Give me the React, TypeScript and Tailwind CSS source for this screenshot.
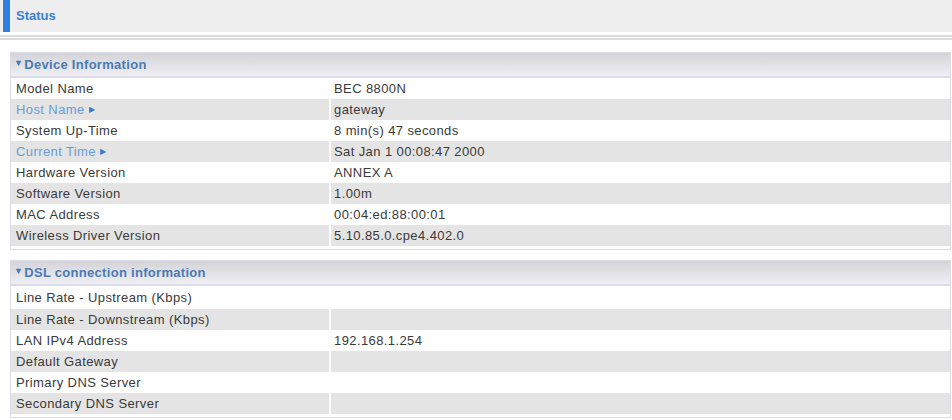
const device: { label: string; value: string; link?: boolean }[] = [
  { label: 'Model Name', value: 'BEC 8800N' },
  { label: 'Host Name', value: 'gateway', link: true },
  { label: 'System Up-Time', value: '8 min(s) 47 seconds' },
  { label: 'Current Time', value: 'Sat Jan 1 00:08:47 2000', link: true },
  { label: 'Hardware Version', value: 'ANNEX A' },
  { label: 'Software Version', value: '1.00m' },
  { label: 'MAC Address', value: '00:04:ed:88:00:01' },
  { label: 'Wireless Driver Version', value: '5.10.85.0.cpe4.402.0' },
]

const dsl: { label: string; value: string; link?: boolean }[] = [
  { label: 'Line Rate - Upstream (Kbps)', value: '' },
  { label: 'Line Rate - Downstream (Kbps)', value: '' },
  { label: 'LAN IPv4 Address', value: '192.168.1.254' },
  { label: 'Default Gateway', value: '' },
  { label: 'Primary DNS Server', value: '' },
  { label: 'Secondary DNS Server', value: '' },
]

function Section({ title, rows, firstTall }: { title: string; rows: typeof device; firstTall?: boolean }) {
  return (
    <div className="ml-[10px] mr-[1px] border border-[#dcdce8] pb-[3px]">
      <div className="h-[25px] flex items-center pl-[3px] bg-gradient-to-b from-[#d4d4d8] to-[#efeff3] border-b-2 border-[#dcdce8] text-[13px] tracking-[0.3px] font-bold text-[#4a7bb3]">
        <span className="text-[9px] mr-[1px] -mt-[2px]">▼</span>
        {title}
      </div>
      {rows.map((r, i) => (
        <div
          key={r.label}
          className={`flex ${firstTall && i === 0 ? 'h-[23px]' : 'h-[21px]'} items-center text-[13px] tracking-[0.4px] ${
            i % 2 === 1 ? 'bg-[#e4e4e4]' : 'bg-white'
          }`}
        >
          <div className={`w-[318px] pl-[5px] h-full flex items-center ${r.link ? 'text-[#6a9bd8]' : 'text-[#3a3a3a]'}`}>
            {r.label}
            {r.link && <span className="text-[8px] ml-[4px] text-[#3f78c8]">▶</span>}
          </div>
          <div className="w-[2px] h-full bg-white" />
          <div className="flex-1 pl-[3px] h-full flex items-center text-[#3a3a3a]">{r.value}</div>
        </div>
      ))}
    </div>
  )
}

export default function App() {
  return (
    <div className="w-[952px] h-[420px] bg-white overflow-hidden" style={{ fontFamily: '"Liberation Sans", Arial, sans-serif' }}>
      {/* Header */}
      <div className="h-[32px] bg-[#eeeeee] flex items-stretch">
        <div className="w-[7px] ml-[3px] bg-[#2f7fe0]" />
        <span className="ml-[6px] self-center text-[13px] font-bold text-[#3a7fd0]">Status</span>
      </div>
      <div className="mt-[3px] h-[5px] border-t-2 border-b-2 border-[#dcdcdc]" />

      <div className="mt-[12px]">
        <Section title="Device Information" rows={device} />
      </div>
      <div className="mt-[10px]">
        <Section title="DSL connection information" rows={dsl} firstTall />
      </div>
    </div>
  )
}
